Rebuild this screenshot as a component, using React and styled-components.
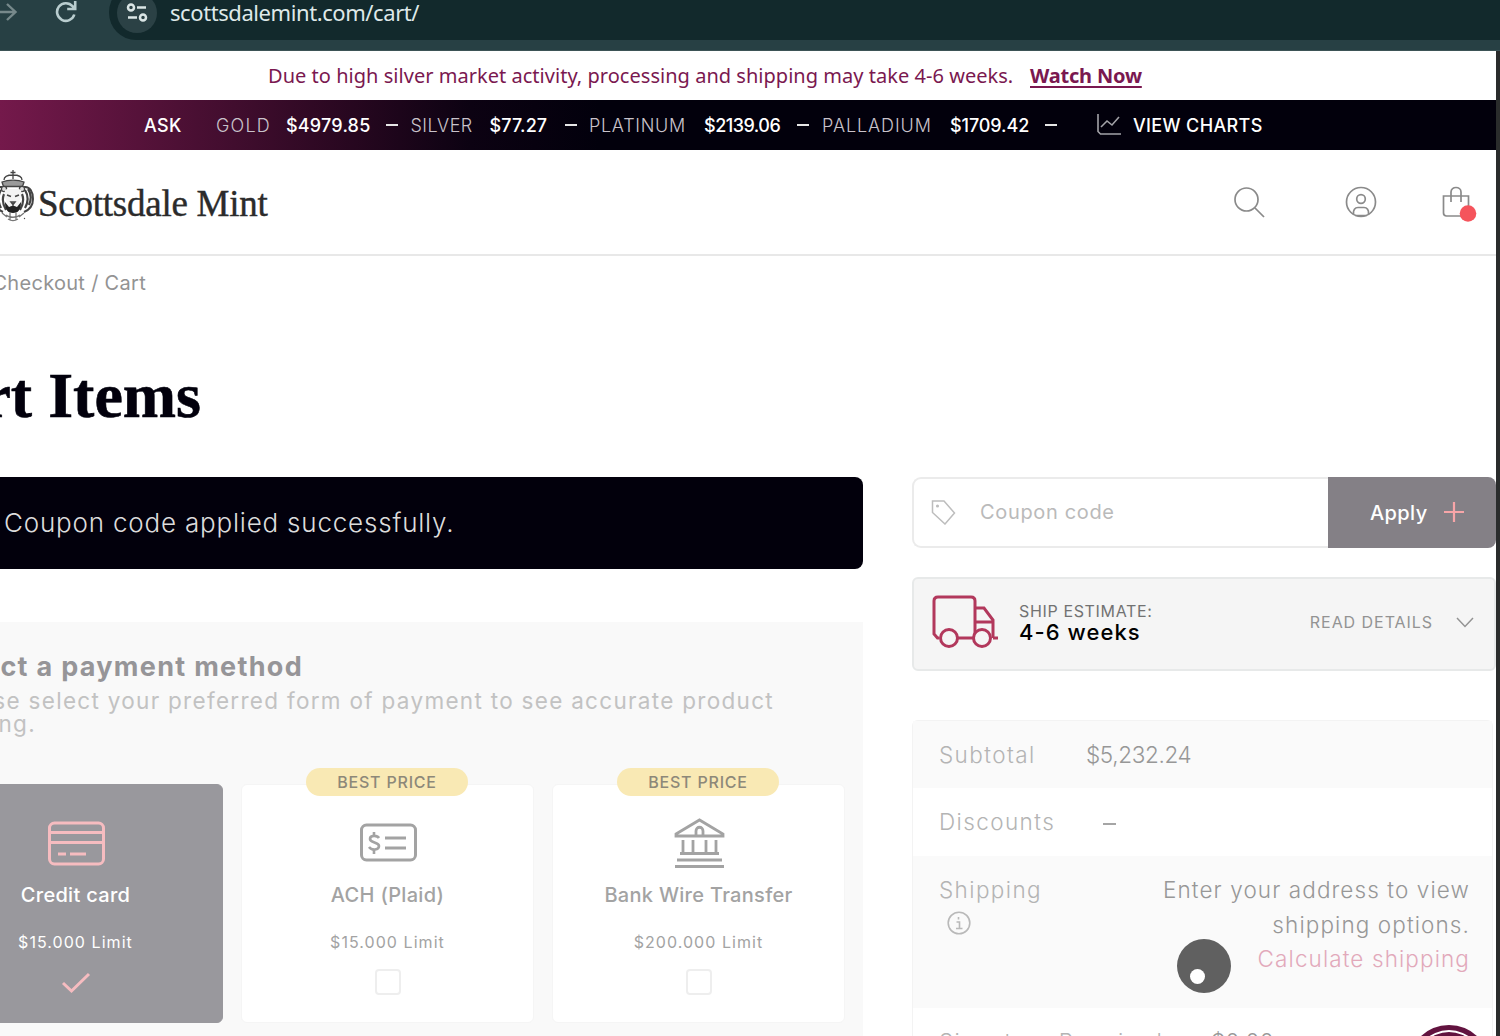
import styled, { createGlobalStyle, css } from "styled-components";

const GlobalStyle = createGlobalStyle`
  * {
    box-sizing: border-box;
  }
  body {
    margin: 0;
    overflow: hidden;
    background: #fff;
    font-family: Inter, "Open Sans", sans-serif;
  }
  p, h1, h2 {
    margin: 0;
  }
`;

const Screen = styled.div`
  width: 1500px;
  height: 1036px;
  overflow: hidden;
  display: flex;
  flex-direction: column;
`;

/* browser bar */

const BrowserBar = styled.div`
  height: 51px;
  flex: none;
  background: #274044;
  border-bottom: 1px solid #3d5356;
  display: flex;
  align-items: flex-start;
  overflow: hidden;
`;

const BarIcon = styled.svg`
  display: block;
  flex: none;
  margin-top: ${({ $top }) => $top || 0}px;
  margin-left: ${({ $left }) => $left || 0}px;
`;

const UrlPill = styled.div`
  margin-left: 31px;
  margin-top: -15px;
  height: 55px;
  flex: 1;
  background: #12292c;
  border-radius: 27px 0 0 27px;
  display: flex;
  align-items: center;
  padding-left: 8px;
`;

const SiteInfo = styled.div`
  width: 40px;
  height: 40px;
  border-radius: 50%;
  background: #2b4145;
  display: flex;
  align-items: center;
  justify-content: center;
`;

const Url = styled.span`
  margin-left: 13px;
  font-family: "Noto Sans", sans-serif;
  font-size: 22px;
  letter-spacing: -0.42px;
  line-height: 30px;
  margin-top: -1px;
  color: #dfe9e9;
  white-space: nowrap;
`;

/* page frame */

const Viewport = styled.div`
  flex: 1;
  min-height: 0;
  display: flex;
  background: #2a2c2c;
  padding-right: 4px;
`;

const Page = styled.div`
  width: 1496px;
  background: #fff;
  overflow: hidden;
`;

const Notice = styled.div`
  height: 49px;
  padding-left: 268px;
  display: flex;
  align-items: center;
  font-family: "Noto Sans", sans-serif;
  font-size: 20px;
  color: #7a1850;
  white-space: nowrap;
`;

const NoticeText = styled.span`
  width: 762px;
  letter-spacing: 0.03px;
`;

const WatchNow = styled.a`
  font-weight: 700;
  letter-spacing: -0.2px;
  text-decoration: underline;
  text-decoration-thickness: 2px;
  text-underline-offset: 3px;
`;

const Ticker = styled.div`
  height: 50px;
  padding-left: 144px;
  display: flex;
  align-items: center;
  background: linear-gradient(90deg, #74194b 0, #5a133c 120px, #2c0822 330px, #0c0212 470px, #02000c 600px);
  font-size: 18px;
  color: #fff;
  white-space: nowrap;
`;

const TickerCell = styled.span`
  width: ${({ $w }) => $w}px;
  flex: none;
  font-weight: ${({ $metal }) => ($metal ? 300 : 500)};
  color: ${({ $metal }) => ($metal ? "#c9c3cb" : "#fff")};
  letter-spacing: ${({ $ls }) => $ls || 0}px;
`;

const Dash = styled.i`
  width: 12px;
  height: 2px;
  flex: none;
  background: #e6e6e6;
  margin-right: ${({ $gap }) => $gap}px;
`;

const Header = styled.header`
  height: 106px;
  border-bottom: 2px solid #e8e8e8;
  display: flex;
  align-items: center;
`;

const Crest = styled.svg`
  display: block;
  flex: none;
  margin: -12px 0 0 -9px;
`;

const Brand = styled.span`
  font-family: "Liberation Serif", serif;
  font-size: 37px;
  line-height: 40px;
  color: #2b2b2b;
  margin-left: 1px;
  margin-top: 4px;
  letter-spacing: -0.25px;
  -webkit-text-stroke: 0.4px #2b2b2b;
  white-space: nowrap;
`;

const HeaderIcons = styled.div`
  margin-left: auto;
  margin-right: 18px;
  display: flex;
  align-items: center;
  svg {
    display: block;
  }
`;

const IconSlot = styled.div`
  margin-left: ${({ $gap }) => $gap}px;
  margin-top: ${({ $top }) => $top || 0}px;
`;

const Breadcrumb = styled.div`
  height: 53px;
  width: 146px;
  display: flex;
  align-items: center;
  justify-content: flex-end;
  font-size: 20px;
  letter-spacing: 0.3px;
  color: #939393;
  white-space: nowrap;
`;

const Title = styled.h1`
  width: 201px;
  height: 168px;
  padding-top: 47px;
  display: flex;
  justify-content: flex-end;
  font-family: "Liberation Serif", serif;
  font-size: 64px;
  font-weight: 700;
  line-height: 80px;
  color: #02000c;
  -webkit-text-stroke: 0.6px #02000c;
  white-space: nowrap;
`;

const Columns = styled.div`
  display: flex;
  align-items: flex-start;
  gap: 49px;
`;

const Main = styled.main`
  width: 863px;
`;

const Alert = styled.div`
  height: 92px;
  background: #02000c;
  border-radius: 0 8px 8px 0;
  padding: 0 0 2px 4px;
  display: flex;
  align-items: center;
  font-size: 26px;
  font-weight: 300;
  letter-spacing: 0.8px;
  color: #dcdcdc;
  white-space: nowrap;
`;

const PaymentPanel = styled.section`
  margin-top: 53px;
  height: 430px;
  background: #f9f9f9;
  padding-top: 29px;
`;

const CutLine = styled.p`
  width: ${({ $end }) => $end}px;
  display: flex;
  justify-content: flex-end;
  white-space: nowrap;
  font-size: 22.5px;
  line-height: 23px;
  letter-spacing: 1.3px;
  color: #c2c2c2;
`;

const PaymentTitle = styled.h2`
  width: 303px;
  display: flex;
  justify-content: flex-end;
  white-space: nowrap;
  font-size: 27px;
  font-weight: 700;
  line-height: 32px;
  letter-spacing: 1.3px;
  margin-bottom: 6px;
  color: #969598;
`;

const Methods = styled.div`
  display: flex;
  gap: 18px;
  margin: 49px 0 0 -72px;
`;

const MethodCard = styled.div`
  position: relative;
  width: 293px;
  height: 239px;
  flex: none;
  display: flex;
  flex-direction: column;
  align-items: center;
  border-radius: 6px;
  border: 1px solid #f5f5f5;
  background: #fff;
  color: #a3a3a3;
  padding-top: 29px;
  ${({ $selected }) =>
    $selected &&
    css`
      width: 295px;
      background: #99989d;
      border-color: #99989d;
      color: #fff;
    `}
`;

const Badge = styled.span`
  position: absolute;
  top: -17px;
  left: 64px;
  width: 162px;
  height: 28px;
  border-radius: 14px;
  background: #f9e9b4;
  color: #8d8879;
  font-size: 16px;
  font-weight: 500;
  line-height: 28px;
  letter-spacing: 0.8px;
  text-align: center;
  white-space: nowrap;
`;

const MethodIcon = styled.svg`
  display: block;
  height: 58px;
  width: 60px;
`;

const MethodName = styled.div`
  margin-top: 10px;
  font-size: 20px;
  font-weight: 500;
  line-height: 26px;
  letter-spacing: 0.3px;
  white-space: nowrap;
`;

const MethodLimit = styled.div`
  margin-top: 23px;
  font-size: 16px;
  line-height: 22px;
  letter-spacing: 1.05px;
  white-space: nowrap;
`;

const Checkbox = styled.span`
  width: 26px;
  height: 26px;
  margin-top: 16px;
  border: 2px solid #eeeeee;
  border-radius: 4px;
`;

const CheckMark = styled.svg`
  display: block;
  margin-top: 18px;
`;

/* summary column */

const Aside = styled.aside`
  width: 584px;
`;

const CouponForm = styled.div`
  height: 71px;
  display: flex;
`;

const CouponField = styled.div`
  width: 416px;
  border: 2px solid #ebebeb;
  border-right: 0;
  border-radius: 9px 0 0 9px;
  display: flex;
  align-items: center;
  padding: 0 0 2px 17px;
  gap: 24px;
  font-size: 20px;
  color: #bababa;
  letter-spacing: 0.65px;
`;

const ApplyButton = styled.div`
  width: 168px;
  background: #848086;
  border-radius: 0 8px 8px 0;
  display: flex;
  align-items: center;
  padding: 1px 0 0 42px;
  gap: 15.5px;
  font-size: 20px;
  font-weight: 500;
  letter-spacing: 0.4px;
  color: #fff;
  svg {
    margin-top: -2px;
  }
`;

const ShipEstimate = styled.div`
  margin-top: 29px;
  height: 94px;
  background: #f5f5f5;
  border: 2px solid #e7e9e9;
  border-radius: 6px;
  display: flex;
  align-items: center;
  padding-left: 18px;
`;

const Truck = styled.svg`
  display: block;
  margin-top: -6px;
`;

const ShipText = styled.div`
  margin-left: 20px;
  margin-top: -4px;
  color: #727272;
  font-size: 16px;
  line-height: 20px;
  letter-spacing: 0.65px;
  white-space: nowrap;
`;

const ShipTime = styled.div`
  font-size: 22px;
  font-weight: 500;
  line-height: 22px;
  letter-spacing: 1.05px;
  color: #000;
`;

const ReadDetails = styled.div`
  margin-left: auto;
  margin-right: 20px;
  margin-top: -4px;
  display: flex;
  align-items: center;
  gap: 23px;
  font-size: 16px;
  letter-spacing: 0.95px;
  color: #939393;
  white-space: nowrap;
`;

const Totals = styled.div`
  margin-top: 49px;
  width: 581px;
  border: 1px solid #f3f3f3;
  border-radius: 6px 6px 0 0;
`;

const TotalRow = styled.div`
  position: relative;
  height: ${({ $h }) => $h || 68}px;
  padding: 17px 22px 0 26px;
  display: flex;
  background: ${({ $shade }) => ($shade ? "#fafafa" : "#fff")};
  font-size: 22.5px;
  font-weight: 300;
  line-height: 34.5px;
  white-space: nowrap;
`;

const TotalLabel = styled.div`
  width: ${({ $w }) => $w || 147}px;
  color: #b4b4b4;
  letter-spacing: 1.4px;
  svg {
    display: block;
    margin: 3px 0 0 8px;
  }
`;

const TotalValue = styled.div`
  color: #979797;
  letter-spacing: ${({ $ls }) => $ls || 0}px;
`;

const ShippingNote = styled.div`
  margin-left: auto;
  text-align: right;
  color: #979797;
  letter-spacing: 1.1px;
  a {
    color: #e2a9ba;
  }
`;

const NoValue = styled.i`
  width: 13px;
  height: 2px;
  margin: 18px 0 0 17px;
  background: #a5a5a5;
`;

const Spinner = styled.div`
  position: absolute;
  left: 264px;
  top: 83px;
  width: 54px;
  height: 54px;
  border-radius: 50%;
  background: #606060;
  &::after {
    content: "";
    position: absolute;
    left: 13px;
    top: 30px;
    width: 15px;
    height: 15px;
    border-radius: 50%;
    background: #fff;
  }
`;

const ChatBubble = styled.div`
  position: absolute;
  left: 495px;
  top: 17px;
  width: 82px;
  height: 82px;
  border-radius: 50%;
  background: #62133f;
  padding: 5px;
  &::after {
    content: "";
    display: block;
    height: 72px;
    border-radius: 50%;
    border: 2px solid #fff;
  }
`;

const metals = [
  { name: "GOLD", price: "$4979.85", nameW: 70, priceW: 100, gap: 12.5, nls: 1.2, pls: 0.2 },
  { name: "SILVER", price: "$77.27", nameW: 79, priceW: 75.5, gap: 12, nls: 0.5, pls: 0.1 },
  { name: "PLATINUM", price: "$2139.06", nameW: 115, priceW: 93, gap: 13, nls: 0.7, pls: -0.5 },
  { name: "PALLADIUM", price: "$1709.42", nameW: 128, priceW: 95, gap: 40, nls: 0.9, pls: -0.1 },
];

function LionCrest() {
  return (
    <Crest width="46" height="54" viewBox="-9 0 46 54" fill="none" stroke="#444" strokeWidth="1.3">
      <path d="M13 1v9M10.500 3.500h5M4 11c0-3 3-5 9-5s9 2 9 5" />
      <path d="M2 13c6-2.500 16-2.500 22 0l-1.500 4.500h-19z" fill="#9a9a9a" />
      <path d="M2 18c-5-1-8 5-8 12 0 6 4 11 9 13M24 18c6-1 9 5 9 12s-4 11-9 13" strokeWidth="2" />
      <path d="M28 20c3 4 4 9 1 16M25 21c3 5 4 11 0 18M22 25c2 5 1 11-2 16M-2 20c-3 4-4 10-1 16M1 21c-3 5-3 12 0 18M4 25c-2 5-1 11 2 16" strokeWidth="2.200" />
      <circle cx="4" cy="20" r="2.600" fill="#ddd" />
      <circle cx="22" cy="20" r="2.600" fill="#ddd" />
      <path d="M5 21c3-2 5-1 8-1s5-1 8 1c1 5-1 9-2 13-1 4-3 6-6 6s-5-2-6-6c-1-4-3-8-2-13z" fill="#f3f3f3" stroke="none" />
      <path d="M7 26l4 1.500M19 26l-4 1.500M11 33h4l-2 2.500zM13 35v2" strokeWidth="1.500" />
      <path d="M5 33c0 8 3 11 8 11s8-3 8-11l-4 5c-2-1.500-6-1.500-8 0z" fill="#222" stroke="none" />
      <path d="M6 46c3 3 11 3 14 0M8 50c3 2 7 2 10 0M10 44v7M16 44v7M2 44l5 4M24 44l-5 4" stroke="#777" />
      <circle cx="24.500" cy="49.500" r="0.700" fill="#4a4a4a" stroke="none" />
    </Crest>
  );
}

function TruckIcon() {
  return (
    <Truck width="67" height="53" viewBox="0 0 67 53" fill="none" stroke="#b2385c" strokeWidth="3">
      <path d="M7 43H5.500L2 39V6c0-2.500 1.500-4 4-4h33c2.500 0 4 1.500 4 4v37M26 43h19M43 13h9l9 12v18M43 27h18M61 43h5" />
      <circle cx="17" cy="43" r="8.500" fill="#f5f5f5" />
      <circle cx="50" cy="43" r="8.500" fill="#f5f5f5" />
    </Truck>
  );
}

export default function App() {
  return (
    <Screen>
      <GlobalStyle />
      <BrowserBar>
        <BarIcon $top={3} width="18" height="20" viewBox="0 0 18 20" fill="none" stroke="#77898b" strokeWidth="2.4">
          <path d="M0 9h15M7 1l8.500 8L7 17" />
        </BarIcon>
        <BarIcon $top={0} $left={37} width="23" height="24" viewBox="0 0 23 24" fill="none" stroke="#b9cdcf" strokeWidth="2.6">
          <path d="M19.300 14.500a8.800 8.800 0 1 1-1.800-8.300l2 2.300M20.200 1v8h-8" />
        </BarIcon>
        <UrlPill>
          <SiteInfo>
            <svg width="22" height="20" viewBox="0 0 22 20" fill="none" stroke="#dbe6e6" strokeWidth="2.500">
              <circle cx="5" cy="4.500" r="3" />
              <path d="M11 4.500h9M2 14.500h9" />
              <circle cx="17" cy="14.500" r="3" />
            </svg>
          </SiteInfo>
          <Url>scottsdalemint.com/cart/</Url>
        </UrlPill>
      </BrowserBar>

      <Viewport>
        <Page>
          <Notice>
            <NoticeText>Due to high silver market activity, processing and shipping may take 4-6 weeks.</NoticeText>
            <WatchNow>Watch Now</WatchNow>
          </Notice>

          <Ticker>
            <TickerCell $w={72} $ls={0.3}>ASK</TickerCell>
            {metals.map((m) => (
              <div key={m.name} style={{ display: "contents" }}>
                <TickerCell $metal $w={m.nameW} $ls={m.nls}>{m.name}</TickerCell>
                <TickerCell $w={m.priceW} $ls={m.pls}>{m.price}</TickerCell>
                <Dash $gap={m.gap} />
              </div>
            ))}
            <BarIcon width="36" height="22" viewBox="0 0 36 22" fill="none" stroke="#a3a2a8" strokeWidth="1.6">
              <path d="M1 0v17.500L3.500 20H24M4 13l6-6 5 4 7-8" />
            </BarIcon>
            <TickerCell $ls={0.35}>VIEW CHARTS</TickerCell>
          </Ticker>

          <Header>
            <LionCrest />
            <Brand>Scottsdale Mint</Brand>
            <HeaderIcons>
              <svg width="31" height="31" viewBox="0 0 31 31" fill="none" stroke="#8a8a8a" strokeWidth="1.700">
                <circle cx="12.500" cy="12.500" r="11.500" />
                <path d="M21 21l9 9" />
              </svg>
              <IconSlot $gap={80}>
                <svg width="32" height="32" viewBox="0 0 32 32" fill="none" stroke="#8a8a8a" strokeWidth="1.700">
                  <circle cx="16" cy="16" r="14.500" />
                  <circle cx="16" cy="13" r="4.300" />
                  <path d="M8.500 28c-.5-4 1.500-6.500 4.500-6.500h6c3 0 5 2.500 4.500 6.500M10 29.500h12" />
                </svg>
              </IconSlot>
              <IconSlot $gap={65} $top={4}>
                <svg width="36" height="36" viewBox="0 0 36 36" fill="none" stroke="#8a8a8a" strokeWidth="1.700">
                  <path d="M1.500 10h25v20h-22c-2 0-3-1-3-3zM9 16V6c0-6 10-6 10 0v10" />
                  <circle cx="26" cy="27.500" r="8.300" fill="#f5545c" stroke="none" />
                </svg>
              </IconSlot>
            </HeaderIcons>
          </Header>

          <Breadcrumb>Checkout / Cart</Breadcrumb>
          <Title>Cart Items</Title>

          <Columns>
            <Main>
              <Alert>Coupon code applied successfully.</Alert>
              <PaymentPanel>
                <PaymentTitle>Select a payment method</PaymentTitle>
                <CutLine $end={774}>
                  Please select your preferred form of payment to see accurate product
                </CutLine>
                <CutLine $end={36}>pricing.</CutLine>
                <Methods>
                  <MethodCard $selected>
                    <MethodIcon viewBox="0 0 60 58" fill="none" stroke="#f6bcc0" strokeWidth="3">
                      <rect x="3.500" y="9" width="54" height="41" rx="5" />
                      <path d="M3 18.500h55M3 28.500h55M12 40h8M24 40h16" />
                    </MethodIcon>
                    <MethodName>Credit card</MethodName>
                    <MethodLimit>$15.000 Limit</MethodLimit>
                    <CheckMark width="30" height="24" viewBox="0 0 30 24" fill="none" stroke="#f6bcc0" strokeWidth="3">
                      <path d="M2 12l8.500 8L28 3" />
                    </CheckMark>
                  </MethodCard>
                  <MethodCard>
                    <Badge>BEST PRICE</Badge>
                    <MethodIcon viewBox="0 0 60 58" fill="none" stroke="#a3a3a3" strokeWidth="3">
                      <rect x="3.500" y="11" width="54" height="35" rx="5" />
                      <path d="M27 24h21M27 34h21" />
                      <path d="M21 24c-2-3-9-3-9 1s9 3 9 7-7 5-10 1M16 18v4M16 35v5" strokeWidth="2.600" />
                    </MethodIcon>
                    <MethodName>ACH (Plaid)</MethodName>
                    <MethodLimit>$15.000 Limit</MethodLimit>
                    <Checkbox />
                  </MethodCard>
                  <MethodCard>
                    <Badge>BEST PRICE</Badge>
                    <MethodIcon viewBox="0 0 60 58" fill="none" stroke="#a3a3a3" strokeWidth="2.800">
                      <path d="M7 20L30.500 6 54 20v2H7zM27 21v-4c0-5 7-5 7 0v4M14 26v13M24 26v13M37 26v13M47 26v13M11 39.500h39M8 46h45M6 52.500h49" />
                    </MethodIcon>
                    <MethodName>Bank Wire Transfer</MethodName>
                    <MethodLimit>$200.000 Limit</MethodLimit>
                    <Checkbox />
                  </MethodCard>
                </Methods>
              </PaymentPanel>
            </Main>

            <Aside>
              <CouponForm>
                <CouponField>
                  <svg width="25" height="26" viewBox="0 0 25 26" fill="none" stroke="#bdbdbd" strokeWidth="1.500">
                    <path d="M1.500 2h11.500l10.500 12L14 25 1.500 13.500z" />
                    <circle cx="6.500" cy="7" r="0.800" />
                  </svg>
                  Coupon code
                </CouponField>
                <ApplyButton>
                  Apply
                  <svg width="22" height="22" viewBox="0 0 22 22" stroke="#f7a5a8" strokeWidth="2.200">
                    <path d="M11 1v20M1 11h20" />
                  </svg>
                </ApplyButton>
              </CouponForm>

              <ShipEstimate>
                <TruckIcon />
                <ShipText>
                  SHIP ESTIMATE:
                  <ShipTime>4-6 weeks</ShipTime>
                </ShipText>
                <ReadDetails>
                  READ DETAILS
                  <svg width="18" height="11" viewBox="0 0 18 11" fill="none" stroke="#939393" strokeWidth="1.500">
                    <path d="M1 1l8 8.500L17 1" />
                  </svg>
                </ReadDetails>
              </ShipEstimate>

              <Totals>
                <TotalRow $shade $h={67}>
                  <TotalLabel>Subtotal</TotalLabel>
                  <TotalValue $ls={-0.35}>$5,232.24</TotalValue>
                </TotalRow>
                <TotalRow>
                  <TotalLabel>Discounts</TotalLabel>
                  <NoValue />
                </TotalRow>
                <TotalRow $shade $h={152}>
                  <TotalLabel>
                    Shipping
                    <svg width="24" height="24" viewBox="0 0 24 24" fill="none" stroke="#b9b9b9" strokeWidth="1.600">
                      <circle cx="12" cy="12" r="10.800" />
                      <path d="M9.500 11h3v6M9 17.500h6.500M11.500 6v2.500" />
                    </svg>
                  </TotalLabel>
                  <ShippingNote>
                    Enter your address to view
                    <br />
                    shipping options.
                    <br />
                    <a>Calculate shipping</a>
                  </ShippingNote>
                  <Spinner />
                </TotalRow>
                <TotalRow>
                  <TotalLabel $w={272}>Signature Required</TotalLabel>
                  <TotalValue $ls={0.4}>$0.00</TotalValue>
                  <ChatBubble />
                </TotalRow>
              </Totals>
            </Aside>
          </Columns>
        </Page>
      </Viewport>
    </Screen>
  );
}
